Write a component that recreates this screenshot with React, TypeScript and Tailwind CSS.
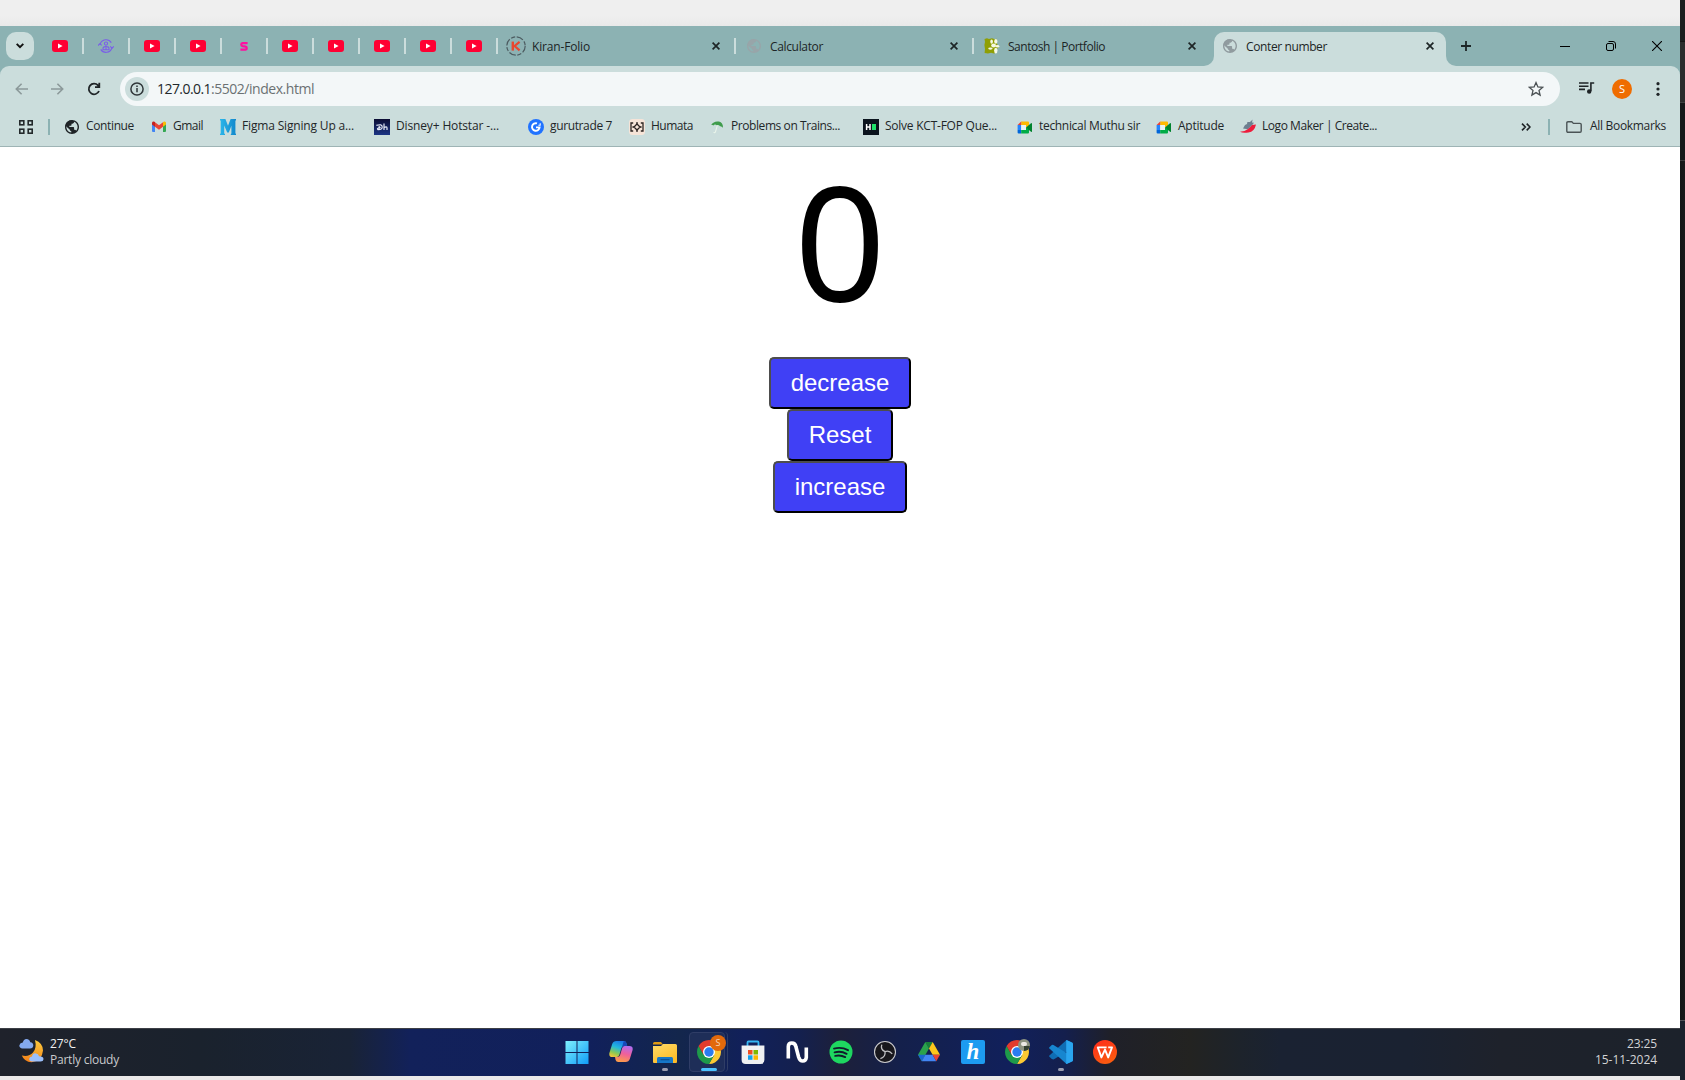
import { useLayoutEffect, useRef, useState, type ReactNode } from "react";

/* Single-line label that tracks its letters so the text fills a given width. */
function Label({ children, w, className = "" }: { children: string; w: number; className?: string }) {
  const ref = useRef<HTMLSpanElement>(null);
  const [spacing, setSpacing] = useState(0);
  useLayoutEffect(() => {
    if (!ref.current) return;
    const natural = ref.current.getBoundingClientRect().width - spacing * children.length;
    setSpacing((w - natural) / children.length);
  }, [w, children]);
  return (
    <span ref={ref} className={"inline-block shrink-0 whitespace-pre " + className} style={{ letterSpacing: spacing }}>
      {children}
    </span>
  );
}

const YouTube = () => (
  <svg width="16" height="12" viewBox="0 0 16 12">
    <rect width="16" height="12" rx="3" fill="#ff0033" />
    <path d="M6 3.5v5L10.6 6z" fill="#fff" />
  </svg>
);

const GlobeIcon = ({ color }: { color: string }) => (
  <svg width="14" height="14" viewBox="2 2 20 20" className="shrink-0">
    <path
      d="M12 2C6.48 2 2 6.48 2 12s4.480 10 10 10 10-4.480 10-10S17.520 2 12 2zm-1 17.930c-3.950-.49-7-3.850-7-7.930 0-.62.08-1.210.21-1.790L9 15v1c0 1.100.9 2 2 2v1.930zm6.900-2.540c-.26-.81-1-1.390-1.900-1.390h-1v-3c0-.55-.45-1-1-1H8v-2h2c.55 0 1-.45 1-1V7h2c1.100 0 2-.9 2-2v-.41c2.930 1.190 5 4.060 5 7.410 0 2.080-.8 3.970-2.100 5.390z"
      fill={color}
    />
    <path d="M3 9a9.500 9.500 0 0 1 10-6.500L13 7h-2v3H8v2l3 4-2 0-5.500-5z" fill={color} />
  </svg>
);

const PurpleIcon = () => (
  <svg width="16" height="14" viewBox="0 0 16 14" fill="none" stroke="#7a5fe8" strokeWidth="1.1">
    <path d="M2.200 5A6.200 6.200 0 0 1 13.300 3.600M13.900 9A6.200 6.200 0 0 1 2.700 10.400" />
    <path d="M0 6.600 1.800 4.800l2 1.600M12.200 7.400 14 9.200l1.800-1.800" />
    <circle cx="8" cy="4.600" r="1.600" />
    <path d="M5 10.800V9.400Q5 7.600 8 7.600t3 1.800v1.400zM8 8.500v2" />
  </svg>
);

const PinkS = () => (
  <svg width="8" height="9" viewBox="0 0 8 9" fill="none" stroke="#ff0fa0" strokeWidth="2.3">
    <path d="M7.600 1.200H2.400Q1.300 1.200 1.300 2.600 1.300 4 2.400 4.200L5.600 4.700Q6.700 4.900 6.700 6.200T5.600 7.700H.4" />
  </svg>
);

const KiranIcon = () => (
  <svg width="20" height="20" viewBox="0 0 20 20" fill="none" className="shrink-0">
    <circle cx="10" cy="10" r="9.2" stroke="#4c5b60" strokeWidth="1.2" strokeDasharray="7 1.8 4.2 1.6" />
    <path d="M6.800 5.600v9" stroke="#e8472f" strokeWidth="2.400" />
    <path d="M13.600 5.800 8.600 10l5 4.400" stroke="#e8472f" strokeWidth="2.200" />
  </svg>
);

const SantoshIcon = () => (
  <svg width="16" height="16" viewBox="0 0 16 16" className="shrink-0">
    <path d="M.5 1 3 .3 5 1l3-.7 3 .9 1.600-.4.4 5L14.600 9l-1.600 2-.4 3.600-2.600.8-3-.6-3 .6L.6 15 1 11 .4 7 1 4z" fill="#8f9f04" />
    <g fill="#f6f8e6">
      <ellipse cx="7.600" cy="3.600" rx="1.300" ry="2.200" />
      <ellipse cx="11.800" cy="3.400" rx="1.600" ry="2.400" />
      <ellipse cx="9.600" cy="7.600" rx="2.400" ry="2" />
      <ellipse cx="13.400" cy="8.200" rx="1.900" ry="1.300" />
      <ellipse cx="11.800" cy="12.600" rx="1.700" ry="2.800" />
      <ellipse cx="6.400" cy="10.600" rx="2.200" ry="1.100" />
    </g>
  </svg>
);

const Close = () => (
  <svg width="8" height="8" viewBox="0 0 8 8" stroke="#1d2526" strokeWidth="1.7">
    <path d="M.6.6l6.800 6.800M7.400.6.6 7.400" />
  </svg>
);

const Gmail = () => (
  <svg width="16" height="12" viewBox="0 0 16 12" className="shrink-0">
    <path d="M1 1.600V10a1 1 0 0 0 1 1h2V4z" fill="#4285f4" />
    <path d="M15 1.600V10a1 1 0 0 1-1 1h-2V4z" fill="#34a853" />
    <path d="M4 1.200v4.600l4 3 4-3V1.200l-4 3z" fill="#ea4335" />
    <path d="M1 2.200C1 .6 2.700.1 4 1.100v4.700L1 3.600z" fill="#c5221f" />
    <path d="M15 2.200C15 .6 13.300.1 12 1.100v4.700l3-2.200z" fill="#fbbc04" />
  </svg>
);

const MIcon = () => (
  <svg width="16" height="16" viewBox="0 0 16 16" className="shrink-0">
    <defs><linearGradient id="mcol" x1="0" y1="0" x2="1" y2="0"><stop stopColor="#2bb6ea" /><stop offset="1" stopColor="#1288cc" /></linearGradient></defs>
    <path d="M0 0h5.400L8 6.800 10.600 0H16v1.200l-.6.500v12.600l.6.600V16h-5.200v-1.100l.6-.5V6.800L8.800 13.500H7.200L4.200 6.400v8l.8.5V16H0v-1.100l.7-.6V1.700L0 1.200z" fill="url(#mcol)" />
  </svg>
);

const Disney = () => (
  <svg width="16" height="16" viewBox="0 0 16 16" className="shrink-0">
    <defs><linearGradient id="dh" x1="0" y1="0" x2="0" y2="1"><stop stopColor="#0b0c33" /><stop offset="1" stopColor="#1c3585" /></linearGradient></defs>
    <rect width="16" height="16" fill="url(#dh)" />
    <path d="M2.400 6.400Q8.200 4.600 8.200 8q0 2.800-4 2.700-2.200-1.600 2.400-2.300M5.200 6.800v3.600M10 4.600V11M10 8.500q3-1.600 3 .4V11" fill="none" stroke="#e6e9f5" strokeWidth="1.200" />
  </svg>
);

const Guru = () => (
  <svg width="16" height="16" viewBox="0 0 16 16" className="shrink-0">
    <circle cx="8" cy="8" r="8" fill="#2173ff" />
    <path d="M9 4.400A3.800 3.800 0 1 0 11.600 8.400H8" fill="none" stroke="#fff" strokeWidth="1.900" />
    <path d="M10.400 6.200h1.800V4.200" fill="none" stroke="#fff" strokeWidth="1.100" />
  </svg>
);

const Humata = () => (
  <svg width="16" height="16" viewBox="0 0 16 16" className="shrink-0">
    <rect width="16" height="16" rx="3.500" fill="#f6e4d8" />
    <path d="M4.200 4H2v8h2.200M11.800 4H14v8h-2.200M8 5l3 3-3 3-3-3z" fill="none" stroke="#2c2422" strokeWidth="1.300" />
    <path d="M8 3v2M8 11v2M3.400 8H5M11 8h1.600" fill="none" stroke="#2c2422" strokeWidth="1.300" />
  </svg>
);

const Umbrella = () => (
  <svg width="16" height="16" viewBox="0 0 16 16" className="shrink-0">
    <path d="M2 6Q5 1.600 10 2.600q4 1 4 6.200-1.600-2-3-1.600-1-1.400-3-1-2.400-1.400-3.600.2Q3 5.600 2 6z" fill="#3f9c4c" />
    <path d="M8.400 6.400 6.400 13q-.8 1.400-1.800.2" fill="none" stroke="#e9f4ea" strokeWidth="1.100" />
  </svg>
);

const HackerIcon = () => (
  <svg width="16" height="16" viewBox="0 0 16 16" className="shrink-0">
    <rect width="16" height="16" fill="#0b141e" />
    <path d="M3.600 5v6M7 5v6M3 8h4.600" stroke="#fff" strokeWidth="1.500" />
    <rect x="9" y="5" width="4" height="6" fill="#1fe26b" />
  </svg>
);

const Meet = () => (
  <svg width="16" height="13" viewBox="0 0 16 13" className="shrink-0">
    <path d="M4.200.5H11q1 0 1 1V5L9 6.500V4H4.200z" fill="#ffba00" />
    <path d="M4.200.5V4H.6z" fill="#ea4335" />
    <path d="M.6 4h3.600v5H.6z" fill="#2684fc" />
    <path d="M.6 9h3.600v3.500H1.600q-1 0-1-1z" fill="#0066da" />
    <path d="M4.200 9H9V6.500L12 8v3.500q0 1-1 1H4.200z" fill="#00ac47" />
    <path d="M9 6.500 14 2.200q1-.6 1 .5v7.600q0 1-1 .5z" fill="#00832d" />
    <path d="M4.200 4H9v5H4.200z" fill="#e8f3f4" />
  </svg>
);

const LogoMaker = () => (
  <svg width="16" height="16" viewBox="0 0 16 16" className="shrink-0">
    <path d="M3 9.400 5 6l2-1 .4-2L10 3l2.600-2.600L12 3.600l2 .2-2 2.400-4 4z" fill="#6d7f90" />
    <path d="M16 5.400q-1.400 7-7.600 8Q3 14.400 0 12.800 5 12.400 8 10T12 6z" fill="#ee1c3c" />
  </svg>
);

const pinned: ReactNode[] = [
  <YouTube />, <PurpleIcon />, <YouTube />, <YouTube />, <PinkS />,
  <YouTube />, <YouTube />, <YouTube />, <YouTube />, <YouTube />,
];

const tabs = [
  { title: "Kiran-Folio", w: 58, icon: <KiranIcon />, gap: "pl-2 gap-[6px]" },
  { title: "Calculator", w: 53, icon: <GlobeIcon color="#98a5a9" />, gap: "pl-[11px] gap-[9px]" },
  { title: "Santosh | Portfolio", w: 97, icon: <SantoshIcon />, gap: "pl-[10px] gap-2" },
];

const bookmarks = [
  { title: "Continue", w: 48, icon: <GlobeIcon color="#1f2427" />, box: "w-[87px] pl-px gap-[7px]" },
  { title: "Gmail", w: 30, icon: <Gmail />, box: "w-[69px] gap-[6px]" },
  { title: "Figma Signing Up a...", w: 112, icon: <MIcon />, box: "w-[154px] gap-[6px]" },
  { title: "Disney+ Hotstar -...", w: 103, icon: <Disney />, box: "w-[154px] gap-[6px]" },
  { title: "gurutrade 7", w: 62, icon: <Guru />, box: "w-[101px] gap-[6px]" },
  { title: "Humata", w: 42, icon: <Humata />, box: "w-[80px] gap-[6px]" },
  { title: "Problems on Trains...", w: 109, icon: <Umbrella />, box: "w-[154px] gap-[6px]" },
  { title: "Solve KCT-FOP Que...", w: 112, icon: <HackerIcon />, box: "w-[154px] gap-[6px]" },
  { title: "technical Muthu sir", w: 101, icon: <Meet />, box: "w-[139px] gap-[6px]" },
  { title: "Aptitude", w: 46, icon: <Meet />, box: "w-[84px] gap-[6px]" },
  { title: "Logo Maker | Create...", w: 115, icon: <LogoMaker />, box: "w-[160px] gap-[6px]" },
];

function TabStrip() {
  return (
    <div className="flex h-10 shrink-0 bg-[#8cb2b3] text-[12px] text-[#1c2526]">
      <div className="ml-[6px] mt-[6px] flex size-7 items-center justify-center rounded-[10px] bg-[#cbdddc]">
        <svg width="8" height="6" viewBox="0 0 8 6" fill="none" stroke="#111" strokeWidth="1.900"><path d="M.7.8 4 4.200 7.300.8" /></svg>
      </div>
      <div className="ml-1 flex">
        {pinned.map((icon, i) => (
          <div key={i} className="flex w-[46px] items-center">
            <div className="flex flex-1 justify-center">{icon}</div>
            <div className="h-4 w-[2px] bg-[#cbdddc]" />
          </div>
        ))}
      </div>
      {tabs.map((t, i) => (
        <div key={t.title} className="flex w-[238px] items-center">
          <div className={"flex flex-1 items-center " + t.gap}>{t.icon}<Label w={t.w} className="pt-[2px]">{t.title}</Label></div>
          <div className="mr-[14px]"><Close /></div>
          <div className={i < 2 ? "h-4 w-[2px] bg-[#cbdddc]" : "h-4 w-[2px]"} />
        </div>
      ))}
      <div className="-ml-[10px] flex w-[254px] shrink-0">
        <div className="w-[12px] self-end bg-[#cbdddc]"><div className="h-[10px] rounded-br-[10px] bg-[#8cb2b3]" /></div>
        <div className="mt-[6px] flex h-[34px] w-[232px] items-center rounded-t-[10px] bg-[#cbdddc] pb-[6px] pl-[9px]">
          <GlobeIcon color="#909b9f" />
          <Label w={81} className="ml-[9px] pt-[2px]">Conter number</Label>
          <div className="ml-auto mr-3"><Close /></div>
        </div>
        <div className="w-[10px] self-end bg-[#cbdddc]"><div className="h-[10px] rounded-bl-[10px] bg-[#8cb2b3]" /></div>
      </div>
      <div className="flex items-center">
        <svg width="10" height="10" viewBox="0 0 10 10" stroke="#1c2526" strokeWidth="1.800" className="ml-[5px]"><path d="M5 0v10M0 5h10" /></svg>
      </div>
      <div className="ml-auto mr-[18px] flex items-center gap-9">
        <svg width="10" height="10" viewBox="0 0 10 10" stroke="#000"><path d="M0 5.500h10" /></svg>
        <svg width="10" height="10" viewBox="0 0 10 10" stroke="#000" fill="none"><rect x=".5" y="2.500" width="7" height="7" rx="1.500" /><path d="M2.500.5H7q2.500 0 2.500 2.500v4.500" /></svg>
        <svg width="10" height="10" viewBox="0 0 10 10" stroke="#000" strokeWidth="1.100"><path d="M0 0l10 10M10 0 0 10" /></svg>
      </div>
    </div>
  );
}

function Toolbar() {
  return (
    <div className="flex h-[46px] items-center">
      <svg width="14" height="12" viewBox="0 0 14 12" fill="none" stroke="#8c999a" strokeWidth="1.600" className="ml-[15px]"><path d="M13 6H1.500M6.600.7 1.300 6l5.300 5.300" /></svg>
      <svg width="14" height="12" viewBox="0 0 14 12" fill="none" stroke="#8c999a" strokeWidth="1.600" className="ml-[21px]"><path d="M1 6h11.500M7.400.7 12.700 6l-5.300 5.300" /></svg>
      <svg width="14" height="14" viewBox="0 0 14 14" fill="none" stroke="#1f2427" strokeWidth="1.800" className="ml-[23px]"><path d="M12 9A5.300 5.300 0 1 1 11 3.400L12 4.600M12.300.8V5.200H8" /></svg>
      <div className="ml-[19px] flex h-[34px] w-[1440px] items-center rounded-full bg-[#f3f7f8] pl-[5px] pr-4">
        <div className="flex size-6 items-center justify-center rounded-full bg-[#cbdddc]">
          <svg width="14" height="14" viewBox="0 0 14 14" fill="none" stroke="#2f3639" strokeWidth="1.500"><circle cx="7" cy="7" r="6.100" /><path d="M7 6v4.200M7 3.500v1.500" /></svg>
        </div>
        <div className="-mt-px ml-2 flex text-[14px]">
          <Label w={54} className="text-[#22282b]">127.0.0.1</Label>
          <Label w={103} className="text-[#6b7173]">:5502/index.html</Label>
        </div>
        <svg width="16" height="16" viewBox="0 0 16 16" fill="none" stroke="#4a5053" strokeWidth="1.300" className="ml-auto"><path d="M8 1.600l1.900 4.400 4.700.4-3.600 3.100 1.100 4.600L8 11.600l-4.100 2.500L5 9.500 1.400 6.400 6.100 6z" /></svg>
      </div>
      <svg width="16" height="12" viewBox="0 0 16 12" fill="none" stroke="#1f2427" strokeWidth="1.600" className="ml-[19px] -translate-y-px"><path d="M0 1h9.500M0 4.200h9.500M0 7.400h6" /><path d="M11.900 9V1H15.200" /><circle cx="10.200" cy="9.500" r="2.200" fill="#1f2427" stroke="none" /></svg>
      <div className="ml-[17px] flex size-5 items-center justify-center rounded-full bg-[#ef6c00] text-[11px] text-white">S</div>
      <svg width="4" height="14" viewBox="0 0 4 14" fill="#1f2427" className="ml-6"><circle cx="2" cy="1.700" r="1.600" /><circle cx="2" cy="7" r="1.600" /><circle cx="2" cy="12.300" r="1.600" /></svg>
    </div>
  );
}

function BookmarksBar() {
  return (
    <div className="flex h-[35px] items-center border-b border-[#9eb4b5] pb-1 text-[12px] text-[#1f2729]">
      <svg width="14" height="14" viewBox="0 0 14 14" fill="none" stroke="#23292b" strokeWidth="1.600" className="ml-[19px]"><rect x=".8" y=".8" width="4" height="4" /><rect x="9.200" y=".8" width="4" height="4" /><rect x=".8" y="9.200" width="4" height="4" /><rect x="9.200" y="9.200" width="4" height="4" /></svg>
      <div className="ml-[15px] mr-[14px] h-4 w-[2px] bg-[#8cb2b3]" />
      {bookmarks.map((b) => (
        <div key={b.title} className={"flex shrink-0 items-center " + b.box}>{b.icon}<Label w={b.w} className="-mt-px pb-px">{b.title}</Label></div>
      ))}
      <svg width="10" height="8" viewBox="0 0 10 8" fill="none" stroke="#1f2427" strokeWidth="1.600" className="ml-auto"><path d="M1 .6 4.300 4 1 7.400M5.700.6 9 4 5.700 7.400" /></svg>
      <div className="ml-[17px] h-4 w-[2px] bg-[#8cb2b3]" />
      <svg width="16" height="12" viewBox="0 0 16 12" fill="none" stroke="#4a5355" strokeWidth="1.400" className="ml-4"><path d="M.8 10V2q0-1.200 1.200-1.200h3.800l1.600 1.600H14q1.200 0 1.200 1.200V10q0 1.200-1.200 1.200H2Q.8 11.200.8 10z" /></svg>
      <Label w={76} className="-mt-px ml-2 mr-[14px] pb-px">All Bookmarks</Label>
    </div>
  );
}

function CounterPage() {
  const [count, setCount] = useState(0);
  const btn =
    "h-[52px] rounded-[5px] border-2 border-t-[#4d4d4d] border-l-[#4d4d4d] border-r-black border-b-black bg-[#4040f5] px-5 font-['Liberation_Sans',Arial,sans-serif] text-[24px] text-white";
  return (
    <main className="flex flex-1 flex-col items-center bg-white">
      <div className="mb-[18px] h-[192px] font-['Noto_Sans',sans-serif] text-[160px] leading-[184px] text-black">{count}</div>
      <button className={btn} onClick={() => setCount(count - 1)}>decrease</button>
      <button className={btn} onClick={() => setCount(0)}>Reset</button>
      <button className={btn} onClick={() => setCount(count + 1)}>increase</button>
    </main>
  );
}

const Windows = () => (
  <svg width="24" height="24" viewBox="0 0 24 24">
    <defs><linearGradient id="win" x1="0" y1="0" x2="1" y2="1"><stop stopColor="#7ff0fd" /><stop offset="1" stopColor="#109cf8" /></linearGradient></defs>
    <path d="M.5 1h11v11H.5zM12.500 1h11v11h-11zM.5 13h11v11H.5zM12.500 13h11v11h-11z" fill="url(#win)" />
  </svg>
);

const Copilot = () => (
  <svg width="24" height="24" viewBox="0 0 24 24">
    <defs>
      <linearGradient id="cpA" x1="0.600" y1="0" x2="0.200" y2="1"><stop stopColor="#1a78e8" /><stop offset=".4" stopColor="#22b8dc" /><stop offset=".75" stopColor="#8fc951" /><stop offset="1" stopColor="#f5c53a" /></linearGradient>
      <linearGradient id="cpB" x1="0.700" y1="0" x2="0.400" y2="1"><stop stopColor="#b06cf0" /><stop offset=".5" stopColor="#f0609a" /><stop offset="1" stopColor="#fb9a4c" /></linearGradient>
    </defs>
    <path d="M7.500 1h7.300q2 0 2.600 2l.8 3H15q-2 0-2.600 2l-2 6.800Q9.700 17 7.700 17H3.500Q-.3 17 .4 13L3.200 4Q4.200 1 7.500 1z" fill="url(#cpA)" />
    <path d="M16.500 21.900H9.200q-2 0-2.600-2L6 17h2.500q2 0 2.600-2l2-6.800Q13.700 6 15.700 6h4.800q3.800 0 3.100 4l-2.800 8.900q-1 3-4.300 3z" fill="url(#cpB)" />
    <path d="M14.800 1q2 0 2.600 2l.8 3H15l-2 1z" fill="#1648b8" />
  </svg>
);

const Folder = () => (
  <svg width="24" height="24" viewBox="0 0 24 24">
    <defs><linearGradient id="fold" x1="0" y1="0" x2="0.600" y2="1"><stop stopColor="#ffdb68" /><stop offset="1" stopColor="#fcbc28" /></linearGradient></defs>
    <path d="M0 3.500Q0 2 1.500 2H8l2 2.500H0z" fill="#e09a12" />
    <path d="M0 6h8l2-2h12.500Q24 4 24 5.500V22q0 1-1 1H1q-1 0-1-1z" fill="url(#fold)" />
    <path d="M4 23v-4.500Q4 17 5.500 17h13q1.500 0 1.500 1.500V23z" fill="#1577c8" />
    <path d="M7.500 19.700h9" stroke="#0d4f91" strokeWidth="1.200" />
  </svg>
);

const Chrome = () => (
  <svg width="24" height="24" viewBox="0 0 24 24">
    <path d="M12 6h10.392A12 12 0 0 1 12 24l5.200-9z" fill="#fcc934" />
    <path d="M6.800 15 1.608 6A12 12 0 0 0 12 24l5.200-9z" fill="#1e9a4a" />
    <path d="M12 6h10.392A12 12 0 0 0 1.608 6l5.200 9z" fill="#e33b2e" />
    <circle cx="12" cy="12" r="6" fill="#fff" />
    <circle cx="12" cy="12" r="4.700" fill="#2a7cf0" />
  </svg>
);

const Store = () => (
  <svg width="24" height="24" viewBox="0 0 24 24">
    <path d="M6.500 7V2.500Q6.500 1.500 7.500 1.500h9q1 0 1 1V7" fill="none" stroke="#35b6f2" strokeWidth="1.800" />
    <path d="M.6 5.600h22.800V20q0 4-4 4H4.600q-4 0-4-4z" fill="#f0f1f3" />
    <path d="M7 10h4.500v4.500H7z" fill="#f04e23" /><path d="M12.500 10H17v4.500h-4.500z" fill="#7eb900" />
    <path d="M7 15.300h4.500v4.500H7z" fill="#12a2ee" /><path d="M12.500 15.300H17v4.500h-4.500z" fill="#fdb900" />
  </svg>
);

const Wave = () => (
  <svg width="24" height="24" viewBox="0 0 24 24" fill="none" stroke="#fff" strokeWidth="3.600">
    <path d="M3.300 18.500V6.500Q3.300 3 6.800 3T11 7l2.600 10q1.200 4 4.200 4t3.500-3.500V7.500" />
  </svg>
);

const Spotify = () => (
  <svg width="24" height="24" viewBox="0 0 24 24" fill="none">
    <circle cx="12" cy="12" r="11.500" fill="#1ed760" />
    <path d="M5 8.600q7.500-2 14 1.600M5.600 12.400q6.500-1.700 12 1.400M6.200 15.900q5.300-1.300 10 1.200" stroke="#111a2c" strokeWidth="1.900" strokeLinecap="round" />
  </svg>
);

const Obs = () => (
  <svg width="24" height="24" viewBox="0 0 24 24" fill="none">
    <circle cx="12" cy="12" r="10.500" fill="#18171c" stroke="#c9c9cc" strokeWidth="1.100" />
    <path d="M8.800 4.600Q7.200 9.400 12 11.600 16 9.800 19.200 13.800M12 11.600Q12.800 17 7.400 18.600" stroke="#bfbfc2" strokeWidth="1.300" />
  </svg>
);

const Drive = () => (
  <svg width="24" height="24" viewBox="0 0 24 24">
    <path d="M8.300 2h7.400L12 8.400z" fill="#188038" />
    <path d="M8.300 2 1 14.800l3.700 6.400L12 8.400z" fill="#2ba24c" />
    <path d="M15.700 2 23 14.800h-7.400L12 8.400z" fill="#fcc71c" />
    <path d="M1 14.800h7.400l-3.700 6.400z" fill="#1967d2" />
    <path d="M8.400 14.800h7.200l3.700 6.400H4.700z" fill="#4285f4" />
    <path d="M15.600 14.800H23l-3.700 6.400z" fill="#e94335" />
  </svg>
);

const HIcon = () => (
  <div className="flex size-6 items-center justify-center rounded-[2px] bg-[#1d9bf0] font-['Liberation_Serif',serif] text-[23px] font-bold italic leading-none text-white">
    h
  </div>
);

const VsCode = () => (
  <svg width="24" height="24" viewBox="0 0 24 24">
    <path d="M17.500 0 24 3v5L4.500 19.500 2.800 19 .4 16.800q-.6-.7 0-1.300z" fill="#0f6db4" />
    <path d="M.4 8.500q-.6-.6 0-1.300L2.800 5q.8-.5 1.700 0L24 17v4l-6.500 3z" fill="#1786cf" />
    <path d="M17.500 0 23 2.600q1 .5 1 1.600v15.600q0 1.100-1 1.600L17.500 24q-.6-.3-.3-1.200V1.200q0-.8.300-1.200z" fill="#2aa5ef" />
  </svg>
);

const Wps = () => (
  <svg width="24" height="24" viewBox="0 0 24 24">
    <defs><linearGradient id="wps" x1="0" y1="0" x2="0.500" y2="1"><stop stopColor="#ff2a1c" /><stop offset="1" stopColor="#fa5a10" /></linearGradient></defs>
    <circle cx="12" cy="12" r="12" fill="url(#wps)" />
    <path d="M13.600 7.400H4.800L8.400 17.400 12 9.600 15.200 17.400 19 7.400H15.200" fill="none" stroke="#fff" strokeWidth="1.900" strokeLinejoin="round" />
  </svg>
);

const ChromeProfile = () => (
  <div className="relative size-6">
    <Chrome />
    <div className="absolute -right-px -top-px size-3 overflow-hidden rounded-full bg-[#8d9380]">
      <div className="ml-[3px] mt-[3px] h-[4px] w-[6px] rounded-full bg-[#eceae4]" />
      <div className="ml-[6px] h-[5px] bg-[#33402f]" />
    </div>
  </div>
);

const Weather = () => (
  <svg width="25" height="25" viewBox="0 0 25 25">
    <defs><linearGradient id="moon" x1="0.500" y1="0" x2="0.300" y2="1"><stop stopColor="#fbc63a" /><stop offset="1" stopColor="#f28018" /></linearGradient></defs>
    <path d="M16 2Q24 5 24 12.500 23 23.500 12.500 24.200 5.500 24 2.800 17.500 10 19 14 14.500T16 2z" fill="url(#moon)" />
    <path d="M3.500 10.500Q0 10 .4 7.200 1 4.800 3.800 4.600 5-.2 9 1.300q2 .8 2.300 3 3 .3 3 3.200-.2 3-3.300 3z" fill="#84a9ee" />
    <path d="M13 23.500q-3-.2-2.800-2.700.3-2.200 2.800-2.400.8-3.600 4-3 2.500.3 3 2.800 4.500 0 4.500 2.800-.2 2.500-3 2.500z" fill="#9cc0fb" />
  </svg>
);

const apps: ReactNode[] = [
  <Windows />, <Copilot />, <Folder />, null, <Store />, <Wave />, <Spotify />,
  <Obs />, <Drive />, <HIcon />, <ChromeProfile />, <VsCode />, <Wps />,
];

function Taskbar() {
  return (
    <div className="flex h-12 shrink-0 items-stretch border-t border-[#3c3f46] bg-[linear-gradient(90deg,#1f222b_0px,#1a222d_200px,#192336_350px,#12215a_410px,#11205b_590px,#13264c_680px,#11205a_745px,#14204e_800px,#1d203a_840px,#14204b_900px,#11205b_1010px,#141f4d_1065px,#1f2029_1110px,#232321_1190px,#1d232b_1240px,#1a2232_1280px,#1a2231_1410px,#1e222b_1500px,#1c222b_1680px)] text-[12px]">
      <div className="flex w-[555px] pl-[19px] pt-[9px]">
        <Weather />
        <div className="-mt-[2px] ml-[6px] flex flex-col leading-4">
          <Label w={26} className="self-start text-[#f2f2f3]">27°C</Label>
          <Label w={69} className="self-start text-[#c9cacc]">Partly cloudy</Label>
        </div>
      </div>
      <div className="flex pb-[2px]">
        {apps.map((icon, i) =>
          i === 3 ? (
            <div key={i} className="relative flex w-11 items-center justify-center">
              <div className="absolute left-[2px] top-[3px] h-10 w-9 rounded border border-[#2f3d66] bg-[#22315a]/80" />
              <div className="absolute left-[37px] top-[3px] h-10 w-1 rounded-r border-r border-[#2f3d66]" />
              <div className="relative size-6">
                <Chrome />
                <div className="absolute -right-[5px] -top-[5px] flex size-4 items-center justify-center rounded-full bg-[#e2690b] text-[9px] text-[#f8d6b8]">S</div>
              </div>
              <div className="absolute bottom-[3px] left-[14px] h-[3px] w-4 rounded-full bg-[#4cc2ff]" />
            </div>
          ) : (
            <div key={i} className="relative flex w-11 items-center justify-center">
              {icon}
              {(i === 2 || i === 11) && <div className="absolute bottom-[3px] left-[19px] h-[3px] w-[6px] rounded-full bg-[#9b9eb0]" />}
            </div>
          ),
        )}
      </div>
      <div className="ml-auto mr-[23px] flex flex-col items-end pt-[7px] leading-4 text-[#d3d4d6]">
        <Label w={30}>23:25</Label>
        <Label w={62}>15-11-2024</Label>
      </div>
    </div>
  );
}

export default function App() {
  return (
    <div className="flex h-[1080px] w-[1685px] overflow-hidden font-['Open_Sans','Noto_Sans',sans-serif]">
      <div className="flex w-[1680px] shrink-0 flex-col">
        <div className="h-[26px] shrink-0 bg-[linear-gradient(#efefef_60%,#e9e9e9)]" />
        <TabStrip />
        <div className="shrink-0 bg-[#8cb2b3]"><div className="rounded-t-[9px] bg-[#cbdddc]"><Toolbar /><BookmarksBar /></div></div>
        <CounterPage />
        <Taskbar />
        <div className="h-1 shrink-0 bg-[#ebe9e9]" />
      </div>
      <div className="flex w-[5px] shrink-0 flex-col">
        <div className="h-[41px] bg-[#1b1f1f]" />
        <div className="h-[61px] border-t border-[#151515] bg-[#2b2d2d]" />
        <div className="h-[58px] border-t border-[#3f4242] bg-[#15191a]" />
        <div className="flex-1 border-t border-[#3a3c3c] bg-[linear-gradient(90deg,#121616,#191b1b)]" />
        <div className="h-[60px] border-t border-[#505257] bg-[#1b222d]" />
      </div>
    </div>
  );
}
